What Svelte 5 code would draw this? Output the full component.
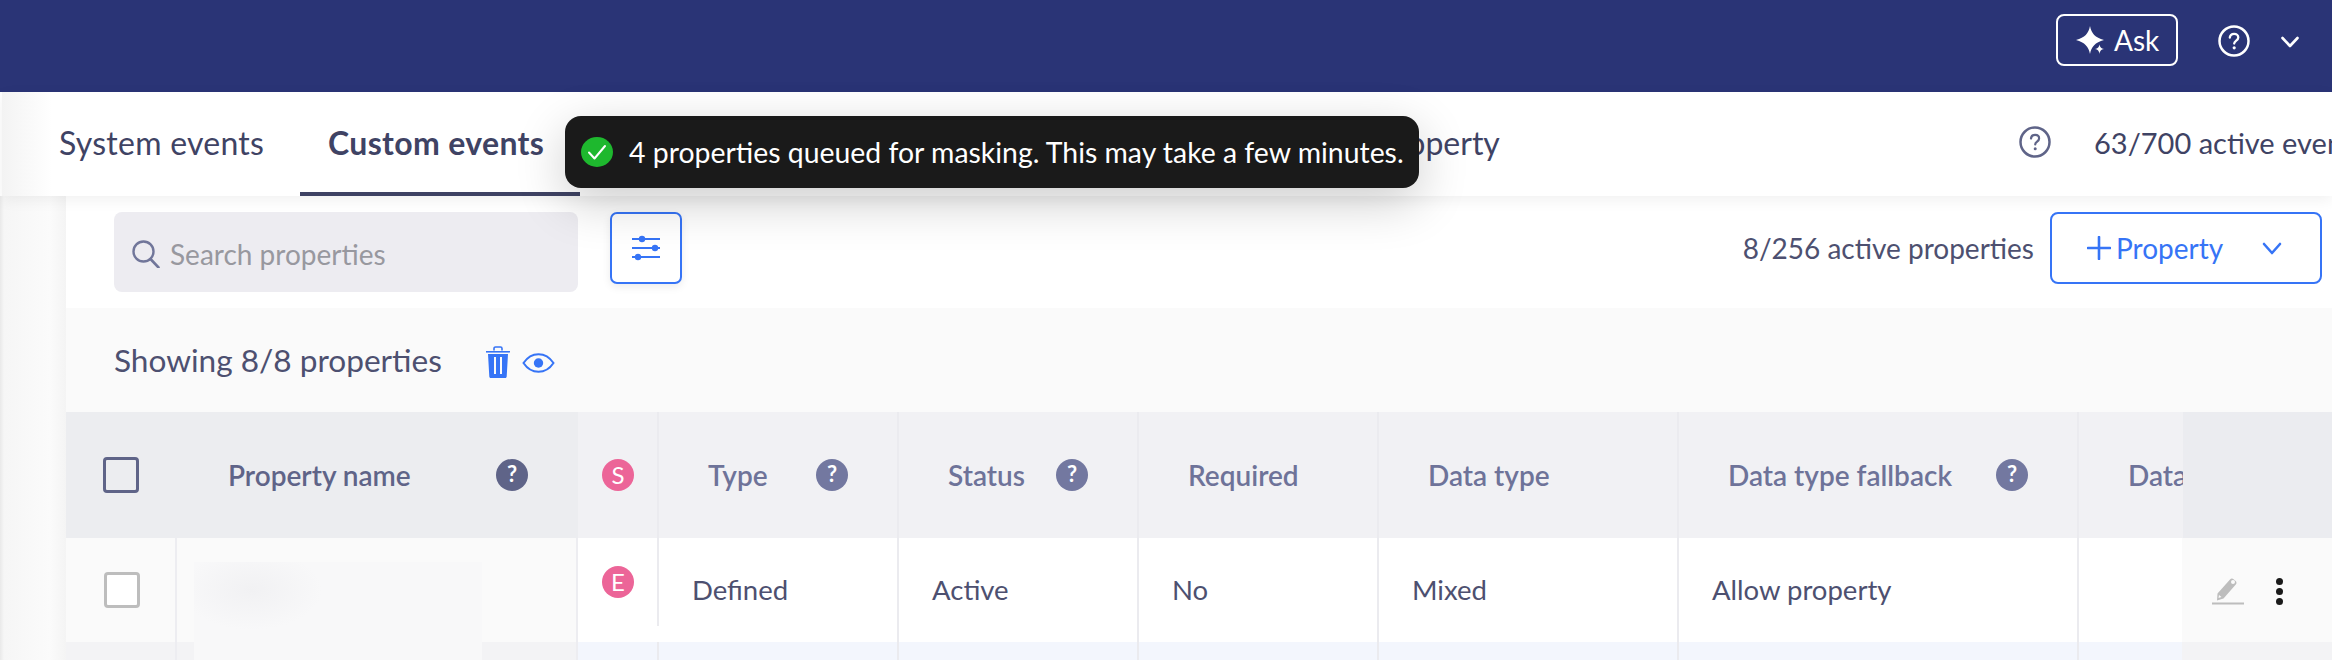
<script>
  const headers = [
    { label: 'Type', help: true },
    { label: 'Status', help: true },
    { label: 'Required' },
    { label: 'Data type' },
    { label: 'Data type fallback', help: true },
    { label: 'Data' }
  ];
  const row = ['Defined', 'Active', 'No', 'Mixed', 'Allow property', ''];
</script>

<div class="page">
  <header class="topbar">
    <button class="ask">
      <svg width="28" height="28" viewBox="0 0 28 28" fill="#fff">
        <path d="M14 0c1.500 7.500 5 11.500 14 14-9 2.500-12.500 6.500-14 14-1.500-7.500-5-11.500-14-14 9-2.500 12.500-6.500 14-14z" />
        <path d="M23.500 18.500c.5 2.800 1.500 3.800 4.500 4.500-3 .7-4 1.700-4.500 5-.5-3.300-1.500-4.300-4.500-5 3-.7 4-1.700 4.500-4.500z" stroke="#2a3476" stroke-width="1.500" paint-order="stroke" />
      </svg>
      Ask
    </button>
    <svg class="top-help" width="32" height="32" viewBox="0 0 32 32" fill="none">
      <circle cx="16" cy="16" r="14.500" stroke="#fff" stroke-width="2.500" />
      <path d="M11.800 12.500c.3-2.300 2-3.700 4.300-3.700 2.400 0 4.200 1.500 4.200 3.600 0 3.100-4.100 3.200-4.100 6.200" stroke="#fff" stroke-width="2.300" stroke-linecap="round" />
      <circle cx="16.200" cy="22.800" r="1.600" fill="#fff" />
    </svg>
    <svg class="top-chev" width="18" height="12" viewBox="0 0 18 12" fill="none">
      <path d="M1.500 2l7.500 8 7.500-8" stroke="#fff" stroke-width="2.600" stroke-linecap="round" stroke-linejoin="round" />
    </svg>
  </header>

  <nav class="tabs">
    <span class="tab first">System events</span>
    <span class="tab active">Custom events</span>
    <span class="tab third">Add property</span>
    <div class="tabs-right">
      <svg class="help-line" width="32" height="32" viewBox="0 0 32 32" fill="none">
        <circle cx="16" cy="16" r="14.500" stroke="#5f6488" stroke-width="2.500" />
        <path d="M12 12.500c.3-2.300 1.900-3.600 4.100-3.600 2.300 0 4 1.400 4 3.500 0 3-3.900 3.200-3.900 6" stroke="#5f6488" stroke-width="2.200" stroke-linecap="round" />
        <circle cx="16.200" cy="22.800" r="1.500" fill="#5f6488" />
      </svg>
      <span class="active-events">63/700 active events</span>
    </div>
  </nav>

  <div class="toast">
    <svg width="32" height="30" viewBox="0 0 32 30">
      <ellipse cx="16" cy="15" rx="16" ry="15" fill="#1eb82e" />
      <path d="M8 15.500l5.500 6L24 9" fill="none" stroke="#fff" stroke-width="2" stroke-linecap="round" stroke-linejoin="round" />
    </svg>
    <span>4 properties queued for masking. This may take a few minutes.</span>
  </div>

  <div class="body">
    <aside class="gutter"></aside>
    <main class="content">
      <div class="toolbar">
        <div class="search">
          <svg width="28" height="28" viewBox="0 0 28 28" fill="none">
            <circle cx="11.500" cy="11.500" r="10" stroke="#71769a" stroke-width="2.400" />
            <path d="M18.500 19l8 8.500" stroke="#71769a" stroke-width="2.600" stroke-linecap="round" />
          </svg>
          <span>Search properties</span>
        </div>
        <button class="filter">
          <svg width="28" height="26" viewBox="0 0 28 26" fill="#3674f6">
            <path d="M0 4h28M0 13h28M0 22h28" stroke="#3674f6" stroke-width="2" />
            <circle cx="10" cy="4" r="3.200" />
            <circle cx="23" cy="13" r="3.200" />
            <circle cx="6" cy="22" r="3.200" />
          </svg>
        </button>
        <span class="count">8/256 active properties</span>
        <button class="add">
          <svg width="24" height="24" viewBox="0 0 24 24">
            <path d="M12 1v22M1 12h22" stroke="#3674f6" stroke-width="2.600" stroke-linecap="round" />
          </svg>
          <span class="add-label">Property</span>
          <svg class="add-chev" width="20" height="13" viewBox="0 0 20 13" fill="none">
            <path d="M2 2l8 9 8-9" stroke="#3674f6" stroke-width="2.600" stroke-linecap="round" stroke-linejoin="round" />
          </svg>
        </button>
      </div>

      <div class="showing">
        <span>Showing 8/8 properties</span>
        <svg class="trash" width="24" height="32" viewBox="0 0 24 32">
          <path d="M8 4.500V2.500C8 1.600 8.700 1 9.500 1h5c.8 0 1.500.6 1.500 1.500v2" fill="none" stroke="#3674f6" stroke-width="1.600" />
          <path d="M0 5h24v1.600H0z" fill="#3674f6" />
          <path fill-rule="evenodd" fill="#3674f6" d="M2 8h20l-1.300 22.500c0 .8-.6 1.500-1.500 1.500H4.800c-.9 0-1.500-.7-1.500-1.500zM8 11v17h2V11zm6 0v17h2V11z" />
        </svg>
        <svg class="eye" width="33" height="20" viewBox="0 0 33 20" fill="none">
          <path d="M1.500 10C5.500 4 10.500 1.200 16.500 1.200S27.500 4 31.500 10c-4 6-9 8.800-15 8.800S5.500 16 1.500 10z" stroke="#3674f6" stroke-width="2" />
          <circle cx="16.500" cy="10" r="4.700" fill="#3674f6" />
        </svg>
      </div>

      <div class="table">
        <!-- header row -->
        <div class="th pinned">
          <span class="check head"></span>
          <span class="name">Property name</span>
          <span class="qmark dark">?</span>
        </div>
        <div class="th badge-cell"><span class="badge">S</span></div>
        {#each headers as h}
          <div class="th col">
            <span>{h.label}</span>
            {#if h.help}<span class="qmark">?</span>{/if}
          </div>
        {/each}

        <!-- first row -->
        <div class="td pinned-row">
          <div class="check-cell"><span class="check"></span></div>
          <div class="name-cell"></div>
        </div>
        <div class="td badge-cell row-badge"><span class="badge">E</span></div>
        {#each row as value, i}
          <div class="td text" class:cut={i === 0}>{value}</div>
        {/each}

        <!-- next row, cut by the window -->
        <div class="td pinned-row next">
          <div class="check-cell"></div>
          <div class="name-cell"></div>
        </div>
        <div class="td next-cell first-next"></div>
        {#each row as _}
          <div class="td next-cell"></div>
        {/each}

        <div class="blurred"></div>

        <div class="actions">
          <div class="actions-head"></div>
          <div class="actions-row">
            <svg width="32" height="28" viewBox="0 0 32 28">
              <path d="M5.500 16.500L18 2.500c1-1.100 2.500-1.200 3.600-.3l2 1.700c1.100 1 1.200 2.500.2 3.600L11.500 21.500l-6.500 2z" fill="#bdbdbd" />
              <circle cx="21" cy="5" r="2" fill="#fafafa" />
              <path d="M7 18l2.500 2-3 1z" fill="#fafafa" />
              <path d="M0 26.500h32" stroke="#bdbdbd" stroke-width="2" />
            </svg>
            <span class="dots"><i></i><i></i><i></i></span>
          </div>
          <div class="actions-next"></div>
        </div>
      </div>
    </main>
  </div>
</div>

<style>
  :global(body) {
    margin: 0;
    background: #fff;
  }

  .page {
    position: relative;
    width: 2332px;
    height: 660px;
    overflow: hidden;
    font-family: Lato, "Open Sans", sans-serif;
    font-size: 28px;
    color: #4d5070;
  }

  button {
    font-family: inherit;
    background: none;
    cursor: pointer;
  }

  .topbar {
    height: 92px;
    background: #2a3476;
    display: flex;
    align-items: center;
    justify-content: flex-end;
    box-sizing: border-box;
    padding-right: 33px;
  }

  .ask {
    width: 122px;
    height: 52px;
    box-sizing: border-box;
    border: 2px solid #fff;
    border-radius: 8px;
    color: #fff;
    font-size: 28px;
    display: flex;
    align-items: center;
    gap: 10px;
    padding: 0 0 0 18px;
    margin-top: -12px;
  }

  .top-help {
    margin-left: 40px;
    margin-top: -10px;
  }

  .top-chev {
    margin-left: 31px;
    margin-top: -8px;
  }

  .tabs {
    height: 104px;
    margin-left: 2px;
    background: linear-gradient(90deg, #f3f3f3 0, #fff 50px);
    display: flex;
    align-items: stretch;
    box-shadow: 0 4px 14px rgba(0, 0, 0, 0.06);
    position: relative;
    z-index: 2;
    font-size: 32px;
  }

  .tab {
    display: flex;
    align-items: center;
    color: #3f4364;
    padding-bottom: 4px;
    box-sizing: border-box;
    white-space: nowrap;
  }

  .first {
    margin-left: 57px;
    width: 205px;
    letter-spacing: 0.25px;
  }

  .active {
    font-weight: 700;
    margin-left: 36px;
    width: 280px;
    padding-left: 28px;
    border-bottom: 4px solid #3f4364;
    padding-bottom: 0;
    letter-spacing: 0.35px;
  }

  .third {
    margin-left: 733px;
  }

  .tabs-right {
    margin-left: auto;
    display: flex;
    align-items: center;
    padding-bottom: 4px;
  }

  .help-line {
    margin-right: 43px;
  }

  .active-events {
    width: 238px;
    white-space: nowrap;
    color: #3f4364;
    font-size: 29px;
  }

  .toast {
    position: absolute;
    left: 565px;
    top: 116px;
    width: 854px;
    height: 72px;
    box-sizing: border-box;
    z-index: 5;
    background: #1a1a1a;
    border-radius: 16px;
    box-shadow: 0 14px 50px rgba(0, 0, 0, 0.2);
    display: flex;
    align-items: center;
    gap: 16px;
    padding-left: 16px;
    color: #fff;
    white-space: nowrap;
    font-size: 28.4px;
  }

  .body {
    display: flex;
    height: 464px;
  }

  .gutter {
    width: 66px;
    flex: none;
    background: linear-gradient(90deg, #e9e9e9 0, #f6f6f6 4px, #fbfbfb 50px, #f4f4f4 66px);
  }

  .content {
    position: relative;
    flex: 1;
    min-width: 0;
    overflow: hidden;
  }

  .toolbar {
    height: 112px;
    box-sizing: border-box;
    background: #fff;
    padding: 16px 10px 0 48px;
    display: flex;
    align-items: flex-start;
  }

  .search {
    width: 464px;
    height: 80px;
    box-sizing: border-box;
    background: #edecf1;
    border-radius: 8px;
    display: flex;
    align-items: center;
    gap: 10px;
    padding: 4px 0 0 18px;
    color: #98989f;
  }

  .filter {
    width: 72px;
    height: 72px;
    margin-left: 32px;
    box-sizing: border-box;
    border: 2px solid #3674f6;
    border-radius: 7px;
    padding: 0;
    background: #fff;
    display: flex;
    align-items: center;
    justify-content: center;
    box-shadow: 0 3px 8px rgba(0, 0, 0, 0.08);
  }

  .count {
    margin-left: auto;
    margin-right: 16px;
    line-height: 72px;
  }

  .add {
    width: 272px;
    height: 72px;
    box-sizing: border-box;
    border: 2px solid #3674f6;
    border-radius: 8px;
    color: #3674f6;
    font-size: 28px;
    display: flex;
    align-items: center;
    padding: 0 0 0 35px;
  }

  .add-label {
    margin-left: 5px;
  }

  .add-chev {
    margin-left: 39px;
  }

  .showing {
    height: 104px;
    box-sizing: border-box;
    background: #fafafa;
    padding-left: 48px;
    display: flex;
    align-items: flex-start;
    padding-top: 34px;
    line-height: 36px;
    font-size: 31.6px;
  }

  .trash {
    margin-left: 44px;
    margin-top: 4px;
  }

  .eye {
    margin-left: 12px;
    margin-top: 11px;
  }

  .table {
    position: relative;
    display: grid;
    grid-template-columns: 512px 79px 240px 240px 240px 300px 400px 250px;
    grid-template-rows: 126px 104px 18px;
  }

  .th {
    background: #f1f1f4;
    display: flex;
    align-items: center;
    box-sizing: border-box;
    color: #6e7399;
    font-weight: 600;
    white-space: nowrap;
    overflow: hidden;
  }

  .pinned {
    background: #ecedf0;
    color: #5f6488;
    padding: 0 50px 0 37px;
  }

  .check {
    display: block;
    width: 36px;
    height: 36px;
    box-sizing: border-box;
    border: 3px solid #bdbdbd;
    border-radius: 4px;
    background: #fff;
    flex: none;
  }

  .check.head {
    border-color: #5f6488;
    background: none;
  }

  .name {
    margin-left: 89px;
  }

  .qmark {
    width: 32px;
    height: 32px;
    flex: none;
    border-radius: 50%;
    background: #7378a0;
    color: #fff;
    font-size: 22px;
    font-weight: 700;
    text-align: center;
    line-height: 30px;
  }

  .qmark.dark {
    background: #5f6488;
    margin-left: auto;
  }

  .badge-cell {
    padding-left: 24px;
  }

  .badge {
    width: 32px;
    height: 32px;
    border-radius: 50%;
    background: #ec6598;
    color: #fff;
    font-size: 24px;
    font-weight: 400;
    text-align: center;
    line-height: 32px;
  }

  .col {
    border-left: 2px solid #ebebef;
    padding: 0 49px 0 49px;
    justify-content: space-between;
  }

  .td {
    box-sizing: border-box;
    background: #fff;
  }

  .pinned-row {
    display: flex;
    background: #fafafa;
  }

  .check-cell {
    width: 111px;
    box-sizing: border-box;
    padding: 34px 0 0 38px;
    border-right: 2px solid #ededf1;
  }

  .name-cell {
    flex: 1;
    border-right: 2px solid #ededf1;
  }

  .row-badge {
    padding-top: 28px;
    display: flex;
    align-items: flex-start;
  }

  .text {
    border-left: 2px solid #ebebef;
    padding-left: 33px;
    line-height: 104px;
    white-space: nowrap;
    overflow: hidden;
    font-size: 27.5px;
  }

  .text.cut {
    border-left: none;
    padding-left: 35px;
    background: linear-gradient(#ebebef, #ebebef) left top / 2px 88px no-repeat #fff;
  }

  .next {
    background: #f3f3f5;
  }

  .next-cell {
    background: #f3f6fd;
    border-left: 2px solid #ebebef;
  }

  .first-next {
    border-left: none;
  }

  .blurred {
    position: absolute;
    left: 128px;
    top: 150px;
    width: 288px;
    height: 100px;
    background:
      radial-gradient(ellipse 70px 40px at 58px 28px, #f1f1f3, transparent),
      #f8f8f9;
  }

  .actions {
    position: absolute;
    top: 0;
    right: 0;
    width: 150px;
    display: flex;
    flex-direction: column;
    z-index: 1;
  }

  .actions-head {
    height: 126px;
    margin-left: 1px;
    background: #ebecf0;
  }

  .actions-row {
    height: 104px;
    background: #fafafa;
    display: flex;
    align-items: flex-start;
    padding: 39px 0 0 30px;
    box-sizing: border-box;
    gap: 32px;
  }

  .actions-next {
    height: 18px;
    background: #f3f3f5;
  }

  .dots {
    display: flex;
    flex-direction: column;
    gap: 3px;
    margin-top: 1px;
  }

  .dots i {
    display: block;
    width: 7px;
    height: 7px;
    border-radius: 50%;
    background: #1a1a1a;
  }
</style>
